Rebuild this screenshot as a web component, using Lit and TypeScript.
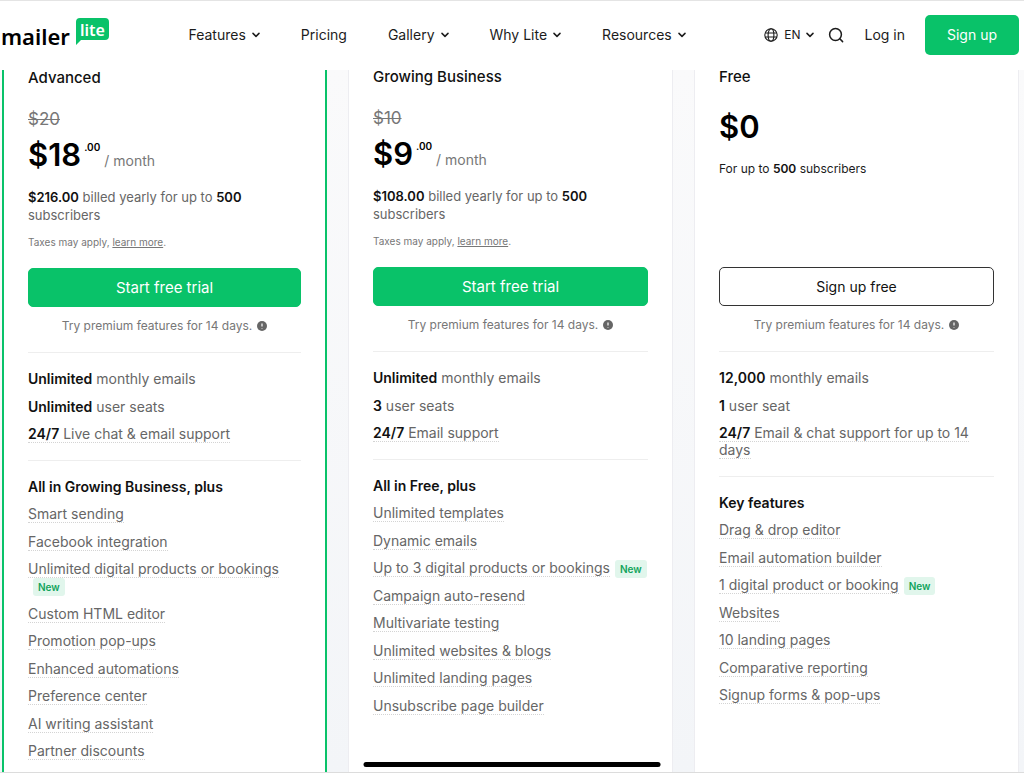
import { LitElement, html, css, nothing } from "lit";
import { customElement, property } from "lit/decorators.js";

interface Feature {
  strong?: string;
  text: string;
  hint?: boolean;
  isNew?: boolean;
}

interface Plan {
  name: string;
  oldPrice?: string;
  price: string;
  cents?: string;
  billed?: string;
  action: string;
  highlighted?: boolean;
  limits: Feature[];
  heading: string;
  features: Feature[];
}

const hint = (text: string, isNew = false): Feature => ({ text, hint: true, isNew });

const plans: Plan[] = [
  {
    name: "Advanced",
    oldPrice: "$20",
    price: "$18",
    cents: ".00",
    billed: "$216.00",
    action: "Start free trial",
    highlighted: true,
    limits: [
      { strong: "Unlimited", text: "monthly emails" },
      { strong: "Unlimited", text: "user seats" },
      { strong: "24/7", text: "Live chat & email support", hint: true },
    ],
    heading: "All in Growing Business, plus",
    features: [
      hint("Smart sending"),
      hint("Facebook integration"),
      hint("Unlimited digital products or bookings", true),
      hint("Custom HTML editor"),
      hint("Promotion pop-ups"),
      hint("Enhanced automations"),
      hint("Preference center"),
      hint("AI writing assistant"),
      hint("Partner discounts"),
    ],
  },
  {
    name: "Growing Business",
    oldPrice: "$10",
    price: "$9",
    cents: ".00",
    billed: "$108.00",
    action: "Start free trial",
    limits: [
      { strong: "Unlimited", text: "monthly emails" },
      { strong: "3", text: "user seats" },
      { strong: "24/7", text: "Email support", hint: true },
    ],
    heading: "All in Free, plus",
    features: [
      hint("Unlimited templates"),
      hint("Dynamic emails"),
      hint("Up to 3 digital products or bookings", true),
      hint("Campaign auto-resend"),
      hint("Multivariate testing"),
      hint("Unlimited websites & blogs"),
      hint("Unlimited landing pages"),
      hint("Unsubscribe page builder"),
    ],
  },
  {
    name: "Free",
    price: "$0",
    action: "Sign up free",
    limits: [
      { strong: "12,000", text: "monthly emails" },
      { strong: "1", text: "user seat" },
      { strong: "24/7", text: "Email & chat support for up to 14 days", hint: true },
    ],
    heading: "Key features",
    features: [
      hint("Drag & drop editor"),
      hint("Email automation builder"),
      hint("1 digital product or booking", true),
      hint("Websites"),
      hint("10 landing pages"),
      hint("Comparative reporting"),
      hint("Signup forms & pop-ups"),
    ],
  },
];

const chevron = html`<svg class="chevron" viewBox="0 0 8 8" width="8" height="8" aria-hidden="true">
  <path d="M1 2.4 4 5.4 7 2.4" fill="none" stroke="currentColor" stroke-width="1.5" stroke-linecap="round" stroke-linejoin="round" />
</svg>`;

@customElement("site-header")
export class SiteHeader extends LitElement {
  static styles = css`
    :host {
      display: block;
      background: #fff;
      border-top: 1px solid #e4e4e4;
      color: #1c1c1c;
    }
    .bar {
      display: flex;
      align-items: center;
      justify-content: space-between;
      height: 69px;
      padding: 0 5px 1px 0;
      box-sizing: border-box;
    }
    .logo {
      display: flex;
      text-decoration: none;
      color: #000;
    }
    .logo svg {
      display: block;
    }
    .word {
      font: 600 22px "Noto Sans", sans-serif;
    }
    .tag {
      font: 600 16px "Noto Sans", sans-serif;
    }
    .nav {
      display: flex;
      gap: 41px;
    }
    .tools {
      display: flex;
      align-items: center;
      gap: 20px;
    }
    .item,
    .lang,
    .search {
      display: flex;
      align-items: center;
      padding: 0;
      border: 0;
      background: none;
      color: inherit;
      font: 400 14px/20px Inter, sans-serif;
      text-decoration: none;
      cursor: pointer;
    }
    .item {
      gap: 6px;
    }
    .lang {
      gap: 6px;
      font-size: 12px;
    }
    .search {
      margin-left: -6px;
    }
    .signup {
      padding: 10px 22px;
      border: 0;
      border-radius: 5px;
      background: #09c269;
      color: #fff;
      font: 400 14px/20px Inter, sans-serif;
      text-decoration: none;
    }
  `;

  render() {
    const menu = (label: string) => html`<button class="item" type="button" aria-haspopup="true">${label} ${chevron}</button>`;
    return html`
      <header class="bar">
        <a class="logo" href="#" aria-label="MailerLite">
          <svg width="110" height="36" viewBox="0 0 110 36" aria-hidden="true">
            <text class="word" x="1" y="28">mailer</text>
            <path d="M80 1h25a4 4 0 0 1 4 4v14a4 4 0 0 1-4 4H81l-5 5V5a4 4 0 0 1 4-4Z" fill="#09c269" />
            <text class="tag" x="80" y="19" fill="#fff">lite</text>
          </svg>
        </a>
        <nav class="nav">
          ${menu("Features")}
          <a class="item" href="#">Pricing</a>
          ${menu("Gallery")} ${menu("Why Lite")} ${menu("Resources")}
        </nav>
        <div class="tools">
          <button class="lang" type="button" aria-haspopup="true">
            <svg width="14" height="14" viewBox="0 0 14 14" fill="none" stroke="currentColor" stroke-width="1.1" aria-hidden="true">
              <circle cx="7" cy="7" r="6.2" />
              <ellipse cx="7" cy="7" rx="2.9" ry="6.2" />
              <path d="M1.2 5h11.6M1.2 9h11.6" />
            </svg>
            EN ${chevron}
          </button>
          <button class="search" type="button" aria-label="Search">
            <svg width="16" height="16" viewBox="0 0 16 16" fill="none" stroke="currentColor" stroke-width="1.5" stroke-linecap="round" aria-hidden="true">
              <circle cx="7.5" cy="7.5" r="5.9" />
              <path d="M11.8 11.8 14.6 14.6" />
            </svg>
          </button>
          <a class="item" href="#">Log in</a>
          <a class="signup" href="#">Sign up</a>
        </div>
      </header>
    `;
  }
}

@customElement("plan-card")
export class PlanCard extends LitElement {
  @property({ attribute: false }) plan!: Plan;

  static styles = css`
    :host {
      display: block;
    }
    .card {
      box-sizing: border-box;
      height: 100%;
      padding: 0 24px;
      border: solid #ededf1;
      border-width: 0 1px;
      background: #fff;
      color: #666;
      font: 400 14px/17px Inter, sans-serif;
    }
    .highlighted {
      padding-top: 1px;
      border-color: #09c269;
      border-width: 0 2px;
    }
    .summary {
      min-height: 197px;
    }
    h2 {
      margin: 0 0 23px;
      color: #111;
      font-size: 15px;
      font-weight: 500;
      line-height: 14px;
    }
    .old {
      display: block;
      color: #777;
      font-size: 17px;
      line-height: 22px;
    }
    .price {
      display: flex;
      align-items: flex-end;
      margin: 10px 0 0;
      color: #000;
    }
    .old + .price {
      margin-top: 5px;
    }
    .amount {
      font-size: 31px;
      font-weight: 600;
      line-height: 40px;
    }
    .cents {
      align-self: flex-start;
      padding: 5px 4px 0 3px;
      font-size: 10px;
      font-weight: 600;
      line-height: 14px;
    }
    .period {
      padding-bottom: 5px;
      color: #777;
      line-height: 18px;
    }
    .billed {
      margin: 13px 0 0;
      font-size: 13px;
      line-height: 18px;
    }
    .solo {
      color: #1c1c1c;
      font-size: 12px;
    }
    strong {
      color: #111;
      font-weight: 600;
    }
    .taxes {
      margin: 10px 0 0;
      color: #777;
      font-size: 10px;
      line-height: 16px;
    }
    .taxes a {
      color: inherit;
    }
    .action {
      box-sizing: border-box;
      display: block;
      width: 100%;
      height: 39px;
      border: 1px solid #09c269;
      border-radius: 5px;
      background: #09c269;
      color: #fff;
      font: 400 15px/20px Inter, sans-serif;
      cursor: pointer;
    }
    .outline {
      border-color: #333;
      background: #fff;
      color: #111;
      font-size: 14px;
    }
    .trial {
      display: flex;
      align-items: center;
      justify-content: center;
      gap: 5px;
      margin: 10px 0 17px;
      color: #777;
      font-size: 12px;
      line-height: 18px;
    }
    .rule {
      height: 1px;
      margin: 0 0 17px;
      border: 0;
      background: #eee;
    }
    h3 {
      margin: 0 0 10px;
      color: #111;
      font-size: 14px;
      font-weight: 600;
      line-height: 17px;
    }
    ul {
      display: flex;
      flex-direction: column;
      gap: 10px;
      margin: 0 0 18px;
      padding: 0;
      list-style: none;
    }
    li:nth-child(even) {
      padding-top: 1px;
    }
    .hint {
      border-bottom: 1px dotted #d4d4d4;
    }
    .badge {
      display: inline-block;
      margin: -2px 0 -2px 5px;
      padding: 0 5px;
      border-radius: 3px;
      background: #e1f6ec;
      color: #12a45c;
      font-size: 10px;
      font-weight: 600;
      line-height: 18px;
      vertical-align: middle;
    }
  `;

  private feature(f: Feature) {
    const body = html`${f.strong ? html`<strong>${f.strong}</strong> ` : nothing}${f.text}`;
    return html`<li>${f.hint ? html`<span class="hint">${body}</span>` : body}${f.isNew ? html`<wbr /><span class="badge">New</span>` : nothing}</li>`;
  }

  render() {
    const p = this.plan;
    return html`
      <article class="card ${p.highlighted ? "highlighted" : ""}">
        <div class="summary">
          <h2>${p.name}</h2>
          ${p.oldPrice ? html`<s class="old">${p.oldPrice}</s>` : nothing}
          <p class="price">
            <span class="amount">${p.price}</span>
            ${p.cents ? html`<span class="cents">${p.cents}</span><span class="period">/ month</span>` : nothing}
          </p>
          ${p.billed
            ? html`<p class="billed"><strong>${p.billed}</strong> billed yearly for up to <strong>500</strong> subscribers</p>
                <p class="taxes">Taxes may apply, <a href="#">learn more</a>.</p>`
            : html`<p class="billed solo">For up to <strong>500</strong> subscribers</p>`}
        </div>
        <button class="action ${p.billed ? "" : "outline"}" type="button">${p.action}</button>
        <p class="trial">
          Try premium features for 14 days.
          <svg width="10" height="10" viewBox="0 0 10 10" aria-hidden="true">
            <circle cx="5" cy="5" r="5" fill="#666" />
            <path d="M5 2.4v3M5 7v.6" stroke="#fff" stroke-width="1.2" />
          </svg>
        </p>
        <hr class="rule" />
        <ul>
          ${p.limits.map((f) => this.feature(f))}
        </ul>
        <hr class="rule" />
        <h3>${p.heading}</h3>
        <ul>
          ${p.features.map((f) => this.feature(f))}
        </ul>
      </article>
    `;
  }
}

@customElement("app-root")
export class AppRoot extends LitElement {
  static styles = css`
    :host {
      display: flex;
      flex-direction: column;
      box-sizing: border-box;
      height: 100vh;
      overflow: hidden;
      border-bottom: 1px solid #dcdcdc;
      background: #fff;
    }
    .plans {
      flex: 1;
      display: grid;
      grid-template-columns: repeat(3, minmax(0, 1fr));
      gap: 21px;
      min-height: 0;
      padding: 0 5px 0 2px;
      background: linear-gradient(#fafafb, #f3f5f8);
    }
    .home {
      position: fixed;
      bottom: 6px;
      left: 50%;
      width: 29%;
      height: 5px;
      border-radius: 3px;
      background: #000;
      transform: translateX(-50%);
    }
  `;

  render() {
    return html`
      <site-header></site-header>
      <main class="plans">${plans.map((p) => html`<plan-card .plan=${p}></plan-card>`)}</main>
      <div class="home"></div>
    `;
  }
}
